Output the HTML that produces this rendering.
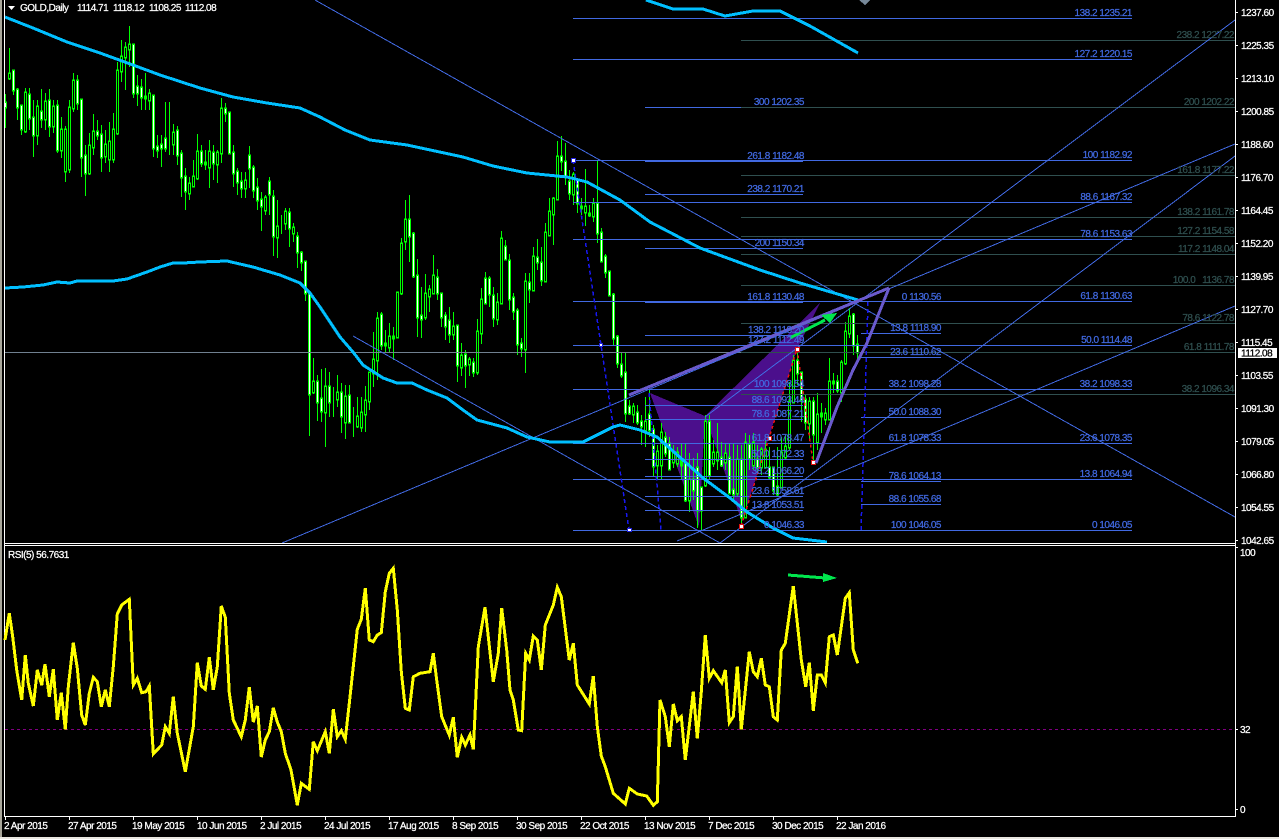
<!DOCTYPE html>
<html><head><meta charset="utf-8"><title>GOLD,Daily</title>
<style>
html,body{margin:0;padding:0;background:#000;width:1279px;height:839px;overflow:hidden}
svg{display:block;position:absolute;left:0;top:0}
text{font-family:"Liberation Sans",sans-serif;font-size:10px;letter-spacing:-.5px;white-space:pre;stroke-width:.25px}
.b text,text.b{fill:#4169E1;stroke:#4169E1}
.g text{fill:#2F4F4F;stroke:#2F4F4F}
.w text,text.w{fill:#fff;stroke:#fff}
.e text{text-anchor:end}
</style></head><body>
<svg width="1279" height="839" viewBox="0 0 1279 839" xmlns="http://www.w3.org/2000/svg" fill="none">
<rect width="1279" height="839" fill="#000"/>
<rect x="0" y="0" width="2" height="839" fill="#a8a69a"/>
<rect x="0" y="837" width="1279" height="2" fill="#e8e6e0"/>

<!-- harmonic pattern -->
<g fill="#4B0F8C" shape-rendering="crispEdges">
<polygon points="650,393 705,416 699,527"/>
<polygon points="705,416 820,303 797,349 742,522"/>
</g>

<g shape-rendering="crispEdges">
<!-- wicks -->
<path stroke="#00FF00" stroke-width="1" d="M5.5 94V128M9.5 48V80M13.5 71V95M17.5 88V120M21.5 105V135M25.5 88V133M29.5 88V130M33.5 100V157M37.5 100V145M41.5 89V128M45.5 93V130M49.5 89V137M53.5 100V133M57.5 100V153M61.5 117V158M65.5 126V182M69.5 100V173M73.5 73V112M77.5 75V110M81.5 100V177M85.5 145V196M89.5 133V175M93.5 114V155M97.5 120V140M101.5 125V172M105.5 130V163M109.5 122V172M113.5 113V163M117.5 62V135M121.5 40V82M125.5 42V90M129.5 26V67M133.5 45V98M137.5 75V106M141.5 79V110M145.5 73V110M149.5 89V110M153.5 96V157M157.5 135V158M161.5 135V167M165.5 102V152M169.5 102V155M173.5 124V155M177.5 126V165M181.5 150V197M185.5 168V210M189.5 177V200M193.5 160V187M197.5 134V180M201.5 145V167M205.5 150V170M209.5 140V188M213.5 145V180M217.5 150V183M221.5 98V163M225.5 103V122M229.5 113V153M233.5 145V187M237.5 168V195M241.5 172V198M245.5 172V198M249.5 146V188M253.5 165V198M257.5 178V210M261.5 192V231M265.5 195V215M269.5 177V215M273.5 190V256M277.5 200V258M281.5 215V234M285.5 208V230M289.5 208V247M293.5 223V242M297.5 232V268M301.5 251V271M305.5 261V301M309.5 293V436M313.5 358V394M317.5 375V421M321.5 369V422M325.5 368V447M329.5 372V417M333.5 387V417M337.5 375V407M341.5 383V433M345.5 385V439M349.5 385V423M353.5 407V437M357.5 397V428M361.5 397V432M365.5 386V432M369.5 373V410M373.5 332V387M377.5 312V380M381.5 312V350M385.5 330V353M389.5 323V352M393.5 327V360M397.5 292V337M401.5 238V295M405.5 200V250M409.5 195V262M413.5 232V278M417.5 259V337M421.5 287V338M425.5 274V320M429.5 285V312M433.5 255V293M437.5 269V300M441.5 293V327M445.5 312V340M449.5 307V343M453.5 312V340M457.5 326V382M461.5 343V376M465.5 350V388M469.5 357V376M473.5 358V377M477.5 319V375M481.5 288V344M485.5 272V303M489.5 276V307M493.5 287V327M497.5 293V325M501.5 231V303M505.5 240V260M509.5 254V310M513.5 293V320M517.5 308V355M521.5 338V357M525.5 273V373M529.5 273V303M533.5 247V291M537.5 239V270M541.5 247V286M545.5 223V281M549.5 198V236M553.5 197V245M557.5 141V200M561.5 136V171M565.5 143V185M569.5 170V200M573.5 172V205M577.5 187V213M581.5 198V215M585.5 169V226M589.5 205V217M593.5 198V222M597.5 160V243M601.5 228V261M605.5 254V278M609.5 271V295M613.5 293V345M617.5 335V368M621.5 353V378M625.5 353V422M629.5 400V415M633.5 403V423M637.5 405V425M641.5 415V445M645.5 397V447M649.5 390V437M653.5 425V477M657.5 445V480M661.5 423V480M665.5 432V457M669.5 437V470M673.5 445V468M677.5 447V467M681.5 443V480M685.5 443V502M689.5 453V512M693.5 458V500M697.5 453V528M701.5 487V530M705.5 415V487M709.5 415V480M713.5 440V467M717.5 423V470M721.5 442V467M725.5 443V470M729.5 443V494M733.5 443V500M737.5 445V497M741.5 445V523M745.5 433V517M749.5 435V470M753.5 433V470M757.5 445V472M761.5 447V475M765.5 440V468M769.5 447V480M773.5 467V495M777.5 447V497M781.5 437V488M785.5 435V460M789.5 382V450M793.5 355V403M797.5 352V385M801.5 373V422M805.5 395V430M809.5 397V440M813.5 397V460M817.5 393V450M821.5 403V433M825.5 408V425M829.5 358V420M833.5 373V393M837.5 375V393M841.5 360V402M845.5 322V365M849.5 308V338M853.5 313V355M857.5 335V363"/>
<defs>
<path id="wb" d="M5.5 103V107M13.5 71V90M17.5 90V107M21.5 106V129M29.5 95V118M33.5 118V135M41.5 112V119M49.5 101V126M57.5 106V150M77.5 81V103M81.5 100V157M85.5 156V173M97.5 132V135M101.5 135V157M133.5 45V93M137.5 87V93M141.5 88V97M153.5 96V148M157.5 147V150M161.5 145V148M165.5 139V148M177.5 131V155M181.5 154V177M185.5 177V191M201.5 152V163M213.5 153V163M225.5 109V113M229.5 113V153M233.5 153V173M237.5 172V182M241.5 182V188M249.5 156V168M253.5 168V190M257.5 188V200M261.5 200V206M269.5 182V194M273.5 197V236M289.5 213V228M297.5 237V252M301.5 253V262M305.5 262V293M309.5 293V394M317.5 382V402M321.5 399V411M329.5 387V402M341.5 393V416M349.5 396V422M381.5 315V345M409.5 220V236M413.5 234V276M417.5 276V317M421.5 316V319M437.5 278V293M441.5 294V317M445.5 316V326M449.5 321V334M457.5 326V365M465.5 355V365M473.5 363V372M485.5 279V303M489.5 279V294M493.5 296V318M505.5 247V259M509.5 261V299M513.5 298V311M517.5 311V344M521.5 344V348M529.5 283V289M537.5 258V262M541.5 263V280M561.5 157V161M565.5 162V176M569.5 182V193M577.5 180V203M597.5 204V233M601.5 233V261M605.5 257V272M609.5 272V295M613.5 295V338M617.5 337V363M621.5 365V375M625.5 373V413M629.5 407V413M637.5 413V422M641.5 422V426M649.5 415V430M653.5 430V466M665.5 438V453M669.5 444V469M685.5 463V500M693.5 480V490M697.5 468V510M701.5 488V510M709.5 422V475M721.5 458V465M729.5 458V493M733.5 490V494M741.5 460V517M749.5 445V458M757.5 460V467M769.5 468V477M773.5 468V490M777.5 487V494M797.5 361V373M801.5 373V400M805.5 400V422M813.5 402V434M837.5 382V390M853.5 315V345M857.5 345V352"/>
<path id="kb" d="M9.5 74V78M25.5 93V131M37.5 107V135M45.5 102V119M53.5 107V126M61.5 130V150M65.5 130V171M69.5 108V169M73.5 81V108M89.5 146V173M93.5 132V147M105.5 145V156M109.5 142V159M113.5 130V159M117.5 71V133M121.5 57V71M125.5 48V57M129.5 45V49M149.5 94V100M173.5 133V144M189.5 184V193M193.5 177V186M197.5 152V178M209.5 152V167M217.5 153V164M221.5 109V153M245.5 181V188M265.5 198V210M277.5 227V237M285.5 212V223M293.5 228V233M313.5 382V392M325.5 387V412M337.5 393V399M345.5 397V422M357.5 417V426M361.5 413V427M365.5 401V414M369.5 373V401M373.5 360V373M377.5 319V360M389.5 337V347M397.5 293V337M401.5 244V293M405.5 220V241M425.5 294V317M429.5 290V296M433.5 276V293M453.5 327V334M461.5 356V367M469.5 360V364M477.5 332V372M481.5 300V333M497.5 303V319M501.5 239V303M525.5 282V349M533.5 257V290M545.5 233V281M549.5 212V235M553.5 199V214M557.5 157V199M573.5 175V194M585.5 207V212M593.5 204V216M633.5 407V414M645.5 422V430M657.5 452V465M661.5 433V465M673.5 452V462M677.5 453V463M689.5 480V500M705.5 422V485M713.5 453V463M717.5 453V460M725.5 454V462M737.5 460V493M745.5 443V517M753.5 443V465M761.5 450V467M765.5 450V467M781.5 453V487M785.5 447V457M789.5 402V447M793.5 361V402M809.5 402V423M817.5 415V442M825.5 414V419M829.5 382V419M841.5 363V392M845.5 332V363M849.5 317V333"/>
<path id="db" d="M145.5 97V98M205.5 163V164M385.5 344V345M393.5 337V338M581.5 207V208M589.5 214V215M681.5 461V465M821.5 414V416M833.5 382V383"/>
</defs>
<g stroke="#00FF00" stroke-width="3" stroke-linecap="square">
<use href="#wb"/><use href="#kb"/><use href="#db"/>
</g>
<use href="#wb" stroke="#fff" stroke-width="1"/>
<use href="#kb" stroke="#000" stroke-width="1"/>

<!-- level lines -->
<path stroke="#2F4F4F" d="M741 40.5H1235M741 107.5H1235M741 175.5H1235M741 217.5H1235M741 236.5H1235M741 254.5H1235M741 285.5H1235M741 323.5H1235M741 394.5H1235"/>
<path stroke="#708090" d="M5 352.5H1235"/>
<path stroke="#2F4F4F" d="M741 352.5H1235"/>
<path stroke="#4169E1" d="M573 18.5H1132M573 59.5H1132M573 160.5H1132M573 202.5H1132M573 239.5H1132M573 301.5H1132M573 345.5H1132M573 389.5H1132M573 443.5H1132M573 479.5H1132M573 530.5H1132M645 107.5H741M645 161.5H803M645 194.5H803M645 248.5H803M645 302.5H803M645 335.5H803M645 345.5H803M645 389.5H803M645 405.5H803M645 419.5H803M645 443.5H803M645 459.5H803M645 476.5H803M645 496.5H803M645 510.5H803M645 530.5H803M861 333.5H941M861 357.5H941M861 417.5H941M861 481.5H941M861 504.5H941"/>

<!-- trend lines -->
<path stroke="#4169E1" d="M315 0L1235 517M353 336L720 543M282 543L1235 144M705 417L1235 20M720 543L1235 156M677 541L1235 306"/>

<!-- dotted pattern legs -->
<path stroke="#1818F0" stroke-width="1.5" stroke-dasharray="4 3" d="M573 160L629 530M649 393L661 530M868 302L861 530"/>
<path stroke="#F01010" stroke-width="1.5" stroke-dasharray="3 3" d="M741 526L769 438L797 349L813 462"/>
<!-- anchors -->
<g fill="#fff" stroke="#2222dd"><rect x="571.5" y="158.5" width="4" height="4"/><rect x="599.5" y="343.5" width="3" height="3"/><rect x="627.5" y="528.5" width="4" height="3"/></g>
<g fill="#fff" stroke="#e01010"><rect x="739.5" y="524.5" width="4" height="4"/><rect x="767.5" y="436.5" width="4" height="4"/><rect x="795.5" y="347.5" width="4" height="4"/><rect x="811.5" y="460.5" width="4" height="4"/></g>

<!-- moving averages -->
<g stroke="#00BFFF" stroke-width="3">
<polyline points="5,17 33,28 67,42 100,53 133,65 160,75 200,88 233,97 267,103 300,108 320,117 345,130 370,140 407,145 463,157 493,166 527,173 567,177 587,182 620,200 650,222 700,248 760,270 800,283 858,300"/>
<polyline points="5,288 23,287 43,285 57,282 70,283 77,281 113,281 127,279 147,272 160,267 173,263 183,263 200,262 227,261 253,267 280,275 300,283 310,293 320,307 340,337 353,352 363,365 383,378 397,383 412,383 427,390 447,398 463,410 477,420 507,428 527,437 550,442 583,442 603,432 613,427 620,425 640,430 657,437 683,460 703,478 730,498 747,512 773,528 793,538 827,542"/>
<polyline points="646,0 673,9 703,9 725,16 753,11 780,11 810,26 858,53"/>
</g>

<!-- purple channel -->
<path stroke="#6A5ACD" stroke-width="3" d="M629 395L889 288M816 463L837 407L853 370L867 343L889 288"/>
<!-- green arrows -->
<path stroke="#00E64D" stroke-width="3" d="M790 338L825 320"/>
<polygon fill="#00E64D" points="837,313 821,315 830,323"/>
<path stroke="#00E64D" stroke-width="3" d="M788 575L825 578"/>
<polygon fill="#00E64D" points="837,578 823,573 823,582"/>
<polygon fill="#778899" points="859,0 870,0 865,5"/>

<!-- window lines -->
<path stroke="#fff" d="M4.5 0V817M1235.5 0V816M4 543.5H1236M4 545.5H1236M4 816.5H1236"/>
<path stroke="#fff" d="M1235 12.5h3M1235 45.5h3M1235 78.5h3M1235 111.5h3M1235 144.5h3M1235 177.5h3M1235 210.5h3M1235 243.5h3M1235 276.5h3M1235 309.5h3M1235 342.5h3M1235 375.5h3M1235 408.5h3M1235 441.5h3M1235 474.5h3M1235 507.5h3M1235 540.5h3M1235 547.5h3M1235 729.5h3M1235 809.5h3M5.5 816V820M69.5 816V820M133.5 816V820M197.5 816V820M261.5 816V820M325.5 816V820M389.5 816V820M453.5 816V820M517.5 816V820M581.5 816V820M645.5 816V820M709.5 816V820M773.5 816V820M837.5 816V820"/>

<!-- RSI -->
<path stroke="#800080" stroke-dasharray="3 3" d="M5 729.5H1235"/>
<g stroke="#FFFF00" stroke-width="3">
<polyline points="5,640 9.3,613.3 12.7,636.7 16.7,670 21.7,700 25.3,655 28.3,683.3 33.3,706 37.3,670 41.7,685 45,664 49.3,696.7 53.3,669.3 57.3,720 61.3,692.7 65.3,729.3 68.3,686.7 73.3,642.7 77.3,668.3 81.7,715 85.3,725 89.3,693.3 93.3,677.3 97.3,681.7 101.3,706.7 105.3,690 109.3,706.7 113.3,666.7 117.3,614 121.7,605 129.3,599.3 133.3,685 137.3,678.3 141.7,692.7 146,691.7 149.3,686 153.3,754 161.7,745 165.3,726.7 169.3,733.3 173.3,696.7 177.3,733.3 185.3,771.7 193.3,726.7 197.3,662.7 201.3,686 205.3,689.3 209.3,657.3 213.3,690 217.3,666.7 221.3,606 225.3,617.3 229.3,693.3 233.3,720 241.3,736.7 245.3,720 249.3,687.3 253.3,722 257.3,706 261.3,757 265.3,740 269.3,731.7 273.3,708 277.3,722 281.3,731.7 285.3,753.3 291,770 297.3,805 301.3,783.3 309.3,789.3 313.3,741.7 317.3,750.7 325.3,731.7 329.3,753.3 333.3,709.3 337.3,736.7 341.3,730.7 345.3,739.3 349.3,703.3 357.3,629.3 361.3,619.3 365.3,588.3 369.3,640 373.3,641.7 377.3,635 381.3,632.7 385.3,591.7 389.3,573.3 393.3,568.3 397.3,610 401.3,671.7 405.3,708.3 409.3,710 413.3,676.7 420,673.3 430,671.7 433.3,653.3 436.7,680 441.7,716.7 449.3,735 453.3,717.3 457.3,757.3 461.7,737.3 465.3,745 470,735 473.3,749.3 475,715 478.3,646.7 485,607.3 493.3,681.7 498.3,653.3 501.7,608.3 506.7,650 510,690 513.3,700 518.3,730 521.7,730.7 525.7,653.3 529.3,660 533.3,636 537.3,640 541.3,670 545.3,625 553.3,605 557.3,587.3 561.3,596.7 569.3,660 573.3,643.3 577.3,685 589.3,704 593.3,676 597.3,726.7 601.3,756 605.3,766.7 613.3,793.3 625.3,804 629.3,788.3 637.3,794 646.7,796 653.3,805.3 657.3,801.7 660,700 665.3,716.7 669.3,746.7 673.3,704 677.3,720.7 681.3,716.7 685.3,760 693.3,691.7 697.3,738.3 701.3,691.7 705.3,635 709.3,678.3 713.3,670.7 721.7,682.7 725.3,670 729.3,722.7 733.3,716.7 737.3,666.7 741.3,729.3 749.3,651.7 753.3,671.7 757.3,676.7 761.3,658.3 765.3,685 769.3,686.7 773.3,716.7 777.3,720 781.3,650 785.3,643.3 793.3,586 801.3,660 805.7,686.7 809.3,662.7 813.3,710.7 817.3,675 821.3,675 825.3,682.7 829.3,636.7 833.3,635 837.3,655 845.3,598.3 849.3,592.7 853.3,650 857.7,663.3"/>
</g>

<!-- current price -->
<rect x="1238" y="348" width="39" height="10" fill="#fff"/>
</g>

<!-- title -->
<polygon fill="#fff" points="8,6 15,6 11.5,10"/>
<g class="w">
<text x="20" y="11">GOLD,Daily</text>
<text x="77" y="11">1114.71</text><text x="113" y="11">1118.12</text><text x="149" y="11">1108.25</text><text x="185" y="11">1112.08</text>
<text x="8" y="558">RSI(5) 56.7631</text>
</g>

<g class="b e">
<text x="1132" y="16">138.2 1235.21</text>
<text x="1132" y="57">127.2 1220.15</text>
<text x="1132" y="158">100 1182.92</text>
<text x="1132" y="200">88.6 1167.32</text>
<text x="1132" y="237">78.6 1153.63</text>
<text x="1132" y="299">61.8 1130.63</text>
<text x="1132" y="343">50.0 1114.48</text>
<text x="1132" y="387">38.2 1098.33</text>
<text x="1132" y="441">23.6 1078.35</text>
<text x="1132" y="477">13.8 1064.94</text>
<text x="1132" y="528">0 1046.05</text>
<text x="804" y="105">300 1202.35</text>
<text x="804" y="159">261.8 1182.48</text>
<text x="804" y="192">238.2 1170.21</text>
<text x="804" y="246">200 1150.34</text>
<text x="804" y="300">161.8 1130.48</text>
<text x="804" y="333">138.2 1118.20</text>
<text x="804" y="343">127.2 1112.49</text>
<text x="804" y="387">100 1098.54</text>
<text x="804" y="403">88.6 1093.44</text>
<text x="804" y="417">78.6 1087.21</text>
<text x="804" y="441">61.8 1078.47</text>
<text x="804" y="457">50.0 1072.33</text>
<text x="804" y="474">38.2 1066.20</text>
<text x="804" y="494">23.6 1058.61</text>
<text x="804" y="508">13.8 1053.51</text>
<text x="804" y="528">0 1046.33</text>
<text x="941" y="300">0 1130.56</text>
<text x="941" y="331">13.8 1118.90</text>
<text x="941" y="355">23.6 1110.62</text>
<text x="941" y="387">38.2 1098.28</text>
<text x="941" y="415">50.0 1088.30</text>
<text x="941" y="441">61.8 1078.33</text>
<text x="941" y="479">78.6 1064.13</text>
<text x="941" y="502">88.6 1055.68</text>
<text x="941" y="528">100 1046.05</text>
</g>
<g class="g e">
<text x="1234" y="38">238.2 1227.22</text>
<text x="1234" y="105">200 1202.22</text>
<text x="1234" y="173">161.8 1177.22</text>
<text x="1234" y="215">138.2 1161.78</text>
<text x="1234" y="234">127.2 1154.58</text>
<text x="1234" y="252">117.2 1148.04</text>
<text x="1234" y="283">100.0   1136.78</text>
<text x="1234" y="321">78.6 1122.78</text>
<text x="1234" y="350">61.8 1111.78</text>
<text x="1234" y="392">38.2 1096.34</text>
</g>

<!-- price axis -->
<g class="w">
<text x="1241" y="16">1237.60</text>
<text x="1241" y="49">1225.35</text>
<text x="1241" y="82">1213.10</text>
<text x="1241" y="115">1200.85</text>
<text x="1241" y="148">1188.60</text>
<text x="1241" y="181">1176.70</text>
<text x="1241" y="214">1164.45</text>
<text x="1241" y="247">1152.20</text>
<text x="1241" y="280">1139.95</text>
<text x="1241" y="313">1127.70</text>
<text x="1241" y="346">1115.45</text>
<text x="1241" y="379">1103.55</text>
<text x="1241" y="412">1091.30</text>
<text x="1241" y="445">1079.05</text>
<text x="1241" y="478">1066.80</text>
<text x="1241" y="511">1054.55</text>
<text x="1241" y="544">1042.65</text>
<text x="1240" y="556">100</text>
<text x="1240" y="733">32</text>
<text x="1240" y="813">0</text>
</g>
<text x="1241" y="356.5" fill="#000" stroke="#000">1112.08</text>

<!-- date axis -->
<g class="w">
<text x="4" y="829">2 Apr 2015</text>
<text x="68" y="829">27 Apr 2015</text>
<text x="132" y="829">19 May 2015</text>
<text x="197" y="829">10 Jun 2015</text>
<text x="260" y="829">2 Jul 2015</text>
<text x="324" y="829">24 Jul 2015</text>
<text x="388" y="829">17 Aug 2015</text>
<text x="452" y="829">8 Sep 2015</text>
<text x="516" y="829">30 Sep 2015</text>
<text x="580" y="829">22 Oct 2015</text>
<text x="644" y="829">13 Nov 2015</text>
<text x="708" y="829">7 Dec 2015</text>
<text x="772" y="829">30 Dec 2015</text>
<text x="836" y="829">22 Jan 2016</text>
</g>
</svg>
</body></html>
